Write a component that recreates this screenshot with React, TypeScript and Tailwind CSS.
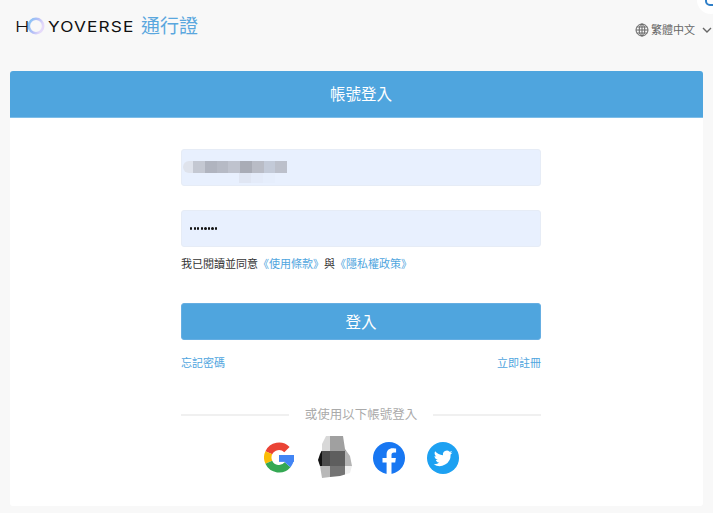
const cjk = '"Liberation Sans", "Noto Sans CJK TC", sans-serif'

const blurBlocks = ['#c4c8d2', '#b0b4bf', '#b6bac5', '#bfc3ce', '#a9acb6', '#b9bcc6', '#c3cad8', '#bcc0cb']

function Logo() {
  return (
    <div className="flex items-center pb-[2px]">
      <span className="w-[12px] origin-left scale-x-[1.3] text-[15px] leading-none text-[#111] font-['Inter',sans-serif] font-light">H</span>
      <svg width="18" height="18" viewBox="0 0 18 18">
        <defs>
          <linearGradient id="ring" x1="0" y1="0" x2="1" y2="0.4">
            <stop offset="0" stopColor="#7fc5f5" />
            <stop offset="0.55" stopColor="#b4bef6" />
            <stop offset="1" stopColor="#e6dafa" />
          </linearGradient>
        </defs>
        <circle cx="9" cy="9" r="7.2" fill="none" stroke="url(#ring)" strokeWidth="2.6" />
      </svg>
      <span className="ml-[3px] w-[86px] origin-left scale-x-[1.15] whitespace-nowrap text-[15px] leading-none tracking-[1px] text-[#111] font-['Inter',sans-serif] font-normal">YOVERSE</span>
    </div>
  )
}

function GoogleIcon() {
  return (
    <svg width="30" height="31" viewBox="0 0 48 48" fill="none" strokeWidth="12">
      <path stroke="#EA4335" d="M36.7 11.3A18 18 0 0 0 7.7 16.4" />
      <path stroke="#FBBC05" d="M7.7 16.4A18 18 0 0 0 7.7 31.6" />
      <path stroke="#34A853" d="M7.7 31.6A18 18 0 0 0 37.8 35.6" />
      <path stroke="#4285F4" d="M37.8 35.6A18 18 0 0 0 42 24" />
      <rect x="24" y="20" width="24" height="11" fill="#4285F4" />
    </svg>
  )
}

function MosaicIcon() {
  return (
    <svg width="34" height="43" viewBox="0 0 34 43">
      <defs>
        <clipPath id="apple">
          <path d="M8 0 H25 L27 13 L32 20 L34 30 L32 37 L22 40 L12 41 L4 42 L3 36 L2 30 L0 24 L2 18 L4 14 L4 8 Z" />
        </clipPath>
      </defs>
      <g clipPath="url(#apple)">
        <rect x="0" y="0" width="12" height="15" fill="#d8d8d8" />
        <rect x="12" y="0" width="22" height="15" fill="#a0a0a0" />
        <rect x="0" y="15" width="4" height="15" fill="#111111" />
        <rect x="4" y="15" width="8" height="15" fill="#4c4c4c" />
        <rect x="12" y="15" width="15" height="15" fill="#5e5e5e" />
        <rect x="27" y="15" width="7" height="15" fill="#b4b4b4" />
        <rect x="0" y="30" width="12" height="13" fill="#b8b8b8" />
        <rect x="12" y="30" width="15" height="13" fill="#747474" />
        <rect x="27" y="30" width="7" height="13" fill="#efefef" />
      </g>
    </svg>
  )
}

function FacebookIcon() {
  return (
    <svg width="32" height="32" viewBox="0 0 32 32">
      <circle cx="16" cy="16" r="16" fill="#1877F2" />
      <path fill="#fff" d="M22.2 20.6l.7-4.6h-4.4v-3c0-1.3.6-2.5 2.6-2.5h2v-3.9s-1.8-.3-3.5-.3c-3.6 0-6 2.2-6 6.2V16H9.5v4.6h4.1V32a16 16 0 0 0 4.9 0V20.6z" />
    </svg>
  )
}

function TwitterIcon() {
  return (
    <svg width="32" height="32" viewBox="0 0 32 32">
      <circle cx="16" cy="16" r="16" fill="#1DA1F2" />
      <path fill="#fff" d="M25.5 10.4c-.7.3-1.4.5-2.2.6.8-.5 1.4-1.2 1.7-2.1-.7.4-1.6.8-2.4.9a3.9 3.9 0 0 0-6.6 3.5c-3.2-.2-6-1.7-7.9-4-.3.6-.5 1.2-.5 2 0 1.3.7 2.5 1.7 3.2-.6 0-1.2-.2-1.8-.5 0 1.9 1.4 3.5 3.1 3.8-.6.2-1.2.2-1.8.1.5 1.5 1.9 2.7 3.6 2.7a7.8 7.8 0 0 1-5.8 1.6 11 11 0 0 0 17-9.8c.8-.5 1.4-1.2 1.9-2z" />
    </svg>
  )
}

function Globe() {
  return (
    <svg width="14" height="14" viewBox="0 0 14 14" fill="none" stroke="#666" strokeWidth="1">
      <circle cx="7" cy="7" r="6" />
      <ellipse cx="7" cy="7" rx="2.8" ry="6" />
      <path d="M1 7h12M1.8 4h10.4M1.8 10h10.4M7 1v12" />
    </svg>
  )
}

export default function App() {
  return (
    <div className="relative flex h-[513px] w-[713px] flex-col overflow-hidden bg-[#f8f8f8]" style={{ fontFamily: cjk }}>
      <div className="absolute -right-[12px] -top-[14px] h-[28px] w-[28px] rounded-full bg-white" />
      <div className="absolute -right-[6px] -top-[8px] h-[14px] w-[14px] rounded-[5px] border-2 border-[#2f7fc8]" />

      <header className="flex h-[71px] items-start justify-between pl-[15px] pr-[1px]">
        <div className="mt-[14px] flex items-center gap-[7px]">
          <Logo />
          <span className="text-[19px] leading-[26px] text-[#5aa7de]">通行證</span>
        </div>
        <div className="mt-[22px] flex items-center text-[11px] leading-[16px] text-[#666]">
          <Globe />
          <span className="ml-[2px]">繁體中文</span>
          <svg width="10" height="6" viewBox="0 0 10 6" fill="none" stroke="#666" strokeWidth="1.4" className="ml-[7px]">
            <path d="M1 1l4 4 4-4" />
          </svg>
        </div>
      </header>

      <main className="mx-[10px] flex h-[435px] flex-col rounded-[3px] bg-white">
        <div className="flex h-[47px] items-center justify-center rounded-t-[3px] border-b border-[#7dbde8] bg-[#4fa5de] pl-[9px] pt-[2px] text-[15.5px] text-white">
          帳號登入
        </div>

        <form className="ml-[171px] flex w-[360px] flex-col pt-[31px]">
          <div className="h-[37px] rounded-[3px] border border-[#e6ecf6] bg-[#e8f0fe] pt-[11px]">
            <div className="ml-[1px] flex">
              <div className="h-[12px] w-[10px] rounded-l-[6px] bg-[#dfe3ec]" />
              {blurBlocks.map((c, i) => (
                <div key={i} className="h-[12px] w-[11.75px]" style={{ background: c }} />
              ))}
            </div>
            <div className="ml-[57px] flex h-[10px] w-[36px]">
              <div className="flex-1 bg-[#e0e6f3]" />
              <div className="flex-1 bg-[#e4ebf9]" />
              <div className="flex-1 bg-[#e6eefc]" />
            </div>
          </div>

          <div className="mt-[24px] flex h-[37px] items-center rounded-[3px] border border-[#e6ecf6] bg-[#e8f0fe] pl-[8px]">
            <div className="flex gap-[1.4px]">
              {[0, 1, 2, 3, 4, 5, 6, 7].map((i) => (
                <div key={i} className="h-[2.2px] w-[2.2px] rounded-full bg-[#111]" />
              ))}
            </div>
          </div>

          <p className="mt-[9px] text-[11px] leading-[16px] text-[#333]">
            我已閱讀並同意<a className="text-[#4fa5de]">《使用條款》</a>與<a className="text-[#4fa5de]">《隱私權政策》</a>
          </p>

          <button type="button" className="mt-[31px] h-[37px] rounded-[3px] border border-[#66aee2] bg-[#4fa5de] pt-[2px] text-[15.5px] text-white">
            登入
          </button>

          <div className="mt-[15px] flex justify-between text-[11px] leading-[16px] text-[#4fa5de]">
            <a>忘記密碼</a>
            <a>立即註冊</a>
          </div>

          <div className="mt-[36px] flex items-center">
            <div className="h-[2px] flex-1 bg-[#f0f0f0]" />
            <span className="px-[16px] text-[12.5px] leading-[16px] text-[#aaa]">或使用以下帳號登入</span>
            <div className="h-[2px] flex-1 bg-[#f0f0f0]" />
          </div>

          <div className="mt-[13px] flex items-center justify-center">
            <GoogleIcon />
            <div className="ml-[24px]">
              <MosaicIcon />
            </div>
            <div className="ml-[21px]">
              <FacebookIcon />
            </div>
            <div className="ml-[22px]">
              <TwitterIcon />
            </div>
          </div>
        </form>
      </main>
    </div>
  )
}
